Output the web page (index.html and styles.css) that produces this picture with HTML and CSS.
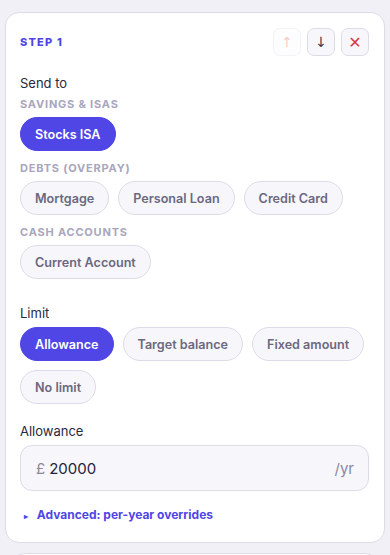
FILE: index.html
```html
<!DOCTYPE html>
<html lang="en">
<head>
    <meta charset="UTF-8">
    <meta name="viewport" content="width=device-width, initial-scale=1.0">
    <title>Steps</title>
    <link rel="stylesheet" href="styles.css">
</head>
<body>
    <div class="step-card">
        <div class="step-head">
            <span class="step-title">Step 1</span>
            <div class="step-actions">
                <button class="icon-btn" disabled>↑</button>
                <button class="icon-btn">↓</button>
                <button class="icon-btn remove">✕</button>
            </div>
        </div>

        <div class="field">
            <div class="field-label">Send to</div>
            <div class="group-label">Savings &amp; ISAs</div>
            <div class="chips">
                <button class="chip active">Stocks ISA</button>
            </div>
            <div class="group-label">Debts (overpay)</div>
            <div class="chips">
                <button class="chip">Mortgage</button>
                <button class="chip">Personal Loan</button>
                <button class="chip">Credit Card</button>
            </div>
            <div class="group-label">Cash accounts</div>
            <div class="chips">
                <button class="chip">Current Account</button>
            </div>
        </div>

        <div class="field limit">
            <div class="field-label">Limit</div>
            <div class="chips">
                <button class="chip active">Allowance</button>
                <button class="chip">Target balance</button>
                <button class="chip">Fixed amount</button>
                <button class="chip">No limit</button>
            </div>
        </div>

        <div class="field">
            <div class="field-label">Allowance</div>
            <div class="money-input">
                <span class="prefix">£</span>
                <span class="amount">20000</span>
                <span class="suffix">/yr</span>
            </div>
        </div>

        <div class="advanced"><span class="caret">▸</span> Advanced: per-year overrides</div>
    </div>

    <div class="step-card next"></div>
</body>
</html>
```

FILE: styles.css
```css
/* Page */
body {
    margin: 0;
    padding: 12px 5px;
    background-color: #f1f0f6;
    font-family: Inter, 'Noto Sans', sans-serif;
    color: #24223a;
}

/* Step card */
.step-card {
    background: #fff;
    border: 1px solid #dddbe8;
    border-radius: 14px;
    padding: 15px 15px 20px 14px;
    margin-bottom: 10px;
}

.step-card.next {
    height: 40px;
    padding: 0;
    margin: 0 6px;
}

.step-head {
    display: flex;
    justify-content: space-between;
    align-items: center;
}

.step-title {
    font-size: 11px;
    font-weight: 800;
    letter-spacing: 1.2px;
    text-transform: uppercase;
    color: #4f46e5;
}

.step-actions {
    display: flex;
    gap: 6px;
}

.icon-btn {
    width: 28px;
    height: 28px;
    padding: 0;
    border: 1px solid #dddbe8;
    border-radius: 7px;
    background: #f7f7fb;
    font-family: 'DejaVu Sans', sans-serif;
    font-size: 14px;
    color: #3a3850;
    cursor: pointer;
}

.icon-btn:disabled {
    opacity: 0.35;
    color: #e07a5f;
    background: #fbfbfd;
}

.icon-btn.remove {
    color: #d43a3a;
    font-size: 16px;
}

/* Fields */
.field {
    margin-top: 19px;
}

.field.limit {
    margin-top: 26px;
}

.field-label {
    font-size: 13px;
    color: #2a283e;
    margin-bottom: 6px;
}

.group-label {
    font-size: 11px;
    font-weight: 700;
    letter-spacing: 0.8px;
    text-transform: uppercase;
    color: #a9a6bd;
    margin: 4px 0 6px;
}

.chips + .group-label {
    margin-top: 10px;
}

.chips {
    display: flex;
    flex-wrap: wrap;
    gap: 9px;
}

.chip {
    height: 34px;
    padding: 0 14px;
    border: 1px solid #dddbe8;
    border-radius: 17px;
    background: #f7f7fb;
    font-family: Inter, 'Noto Sans', sans-serif;
    font-size: 12.6px;
    font-weight: 600;
    color: #6b6880;
    cursor: pointer;
}

.chip.active {
    background: #4f46e5;
    border-color: #4f46e5;
    color: #fff;
}

/* Amount input */
.money-input {
    display: flex;
    align-items: center;
    height: 46px;
    margin-top: 3px;
    padding: 0 14px 0 15px;
    border: 1px solid #dddbe8;
    border-radius: 12px;
    background: #f7f7fb;
    font-size: 15px;
    box-sizing: border-box;
}

.prefix {
    color: #8a879e;
    margin-right: 4px;
}

.amount {
    flex: 1;
    color: #24223a;
}

.suffix {
    color: #8a879e;
}

.advanced {
    margin-top: 16px;
    font-size: 12px;
    font-weight: 700;
    color: #4f46e5;
}

.caret {
    font-size: 8px;
    margin: 0 6px 0 4px;
}
```
